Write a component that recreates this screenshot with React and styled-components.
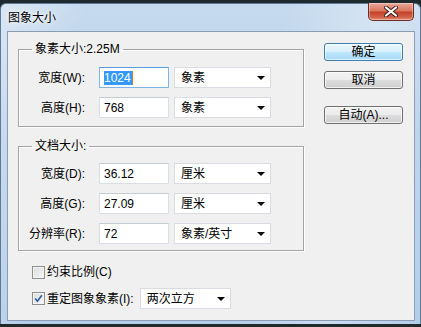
import React from 'react';
import styled, { createGlobalStyle } from 'styled-components';

const GlobalStyle = createGlobalStyle`
    html, body {
        margin: 0;
        padding: 0;
        background: #1f2a2f;
    }
    body {
        font-family: "Liberation Sans", "Noto Sans CJK SC", sans-serif;
        font-size: 12px;
        color: #000;
    }
`;

const Window = styled.div`
    box-sizing: border-box;
    width: 421px;
    height: 321px;
    margin-top: 3px;
    padding: 0 5px 3px 6px;
    border-radius: 6px 6px 0 0;
    border: 1px solid #5d7a99;
    border-bottom: none;
    background:
        linear-gradient(100deg, rgba(255,255,255,0.35) 0%, rgba(255,255,255,0) 18%, rgba(255,255,255,0) 60%, rgba(255,255,255,0.3) 80%, rgba(255,255,255,0) 100%),
        linear-gradient(180deg, #c6daee 0%, #b6cfe9 40%, #b4cde7 100%);
    display: flex;
    flex-direction: column;
`;

const TitleBar = styled.div`
    display: flex;
    align-items: flex-start;
    justify-content: space-between;
    height: 27px;
`;

const Title = styled.div`
    padding: 7px 0 0 1px;
    font-size: 12px;
    line-height: 14px;
    color: #000;
    text-shadow: 0 0 6px rgba(255,255,255,0.95), 0 0 3px rgba(255,255,255,0.9);
`;

const CloseButton = styled.div`
    width: 46px;
    height: 18px;
    margin-top: -1px;
    margin-right: 1px;
    box-sizing: border-box;
    border: 1px solid #6d2b22;
    border-top: none;
    border-radius: 0 0 5px 5px;
    background: linear-gradient(180deg, #e9a99c 0%, #d9785f 45%, #c4412a 55%, #d2644b 85%, #e5907c 100%);
    box-shadow: inset 0 0 0 1px rgba(255,255,255,0.35);
    display: flex;
    align-items: center;
    justify-content: center;
`;

const Client = styled.div`
    box-sizing: border-box;
    width: 408px;
    height: 290px;
    border: 1px solid #8a9db3;
    background: #f0f0f0;
    display: flex;
    padding: 0 11px 0 10px;
`;

const LeftColumn = styled.div`
    width: 286px;
    display: flex;
    flex-direction: column;
`;

const RightColumn = styled.div`
    margin-left: auto;
    width: 79px;
    padding-top: 11px;
    display: flex;
    flex-direction: column;
`;

const Group = styled.fieldset`
    box-sizing: border-box;
    width: 286px;
    min-width: 0;
    margin: ${p => p.$mt}px 0 0;
    padding: ${p => p.$pt}px 0 ${p => p.$pb}px;
    border: 1px solid #a3a3a3;
    box-shadow: inset 1px 1px 0 #fff, 1px 1px 0 #fff;
    display: flex;
    flex-direction: column;
    gap: 9px;
`;

const Legend = styled.legend`
    margin-left: 13px;
    padding: 0 3px;
    line-height: 14px;
    font-size: 12px;
`;

const Row = styled.div`
    display: grid;
    grid-template-columns: 75px 70px 97px;
    column-gap: 5px;
    align-items: center;
    height: 21px;
`;

const Label = styled.label`
    text-align: right;
    padding-right: 9px;
    line-height: 14px;
    white-space: nowrap;
`;

const TextBox = styled.div`
    box-sizing: border-box;
    height: 21px;
    background: #fff;
    border: 1px solid ${p => (p.$focused ? '#7eb4ea' : '#dadfe6')};
    border-top-color: ${p => (p.$focused ? '#569de5' : '#c5cbd3')};
    padding: 0 4px;
    display: flex;
    align-items: center;
    line-height: 14px;
`;

const Selected = styled.span`
    background: #3399ff;
    color: #fff;
    padding: 0 1px 0 0;
    border-right: 1px solid #e07a1a;
`;

const Combo = styled.div`
    box-sizing: border-box;
    width: ${p => p.$w}px;
    height: 21px;
    background: #fff;
    border: 1px solid #d9dde3;
    padding: 0 5px 0 6px;
    display: flex;
    align-items: center;
    justify-content: space-between;
    line-height: 14px;
`;

const Arrow = styled.span`
    width: 0;
    height: 0;
    border-left: 4px solid transparent;
    border-right: 4px solid transparent;
    border-top: 4px solid #000;
`;

const Button = styled.div`
    box-sizing: border-box;
    height: 18px;
    margin-top: ${p => p.$mt}px;
    border: 1px solid ${p => (p.$default ? '#3c7fb1' : '#707070')};
    border-radius: 3px;
    background: ${p => (p.$default
        ? 'linear-gradient(180deg, #eaf6fd 0%, #d9f0fc 50%, #bee6fd 51%, #a7d9f5 100%)'
        : 'linear-gradient(180deg, #f2f2f2 0%, #ebebeb 50%, #dddddd 51%, #cfcfcf 100%)')};
    box-shadow: inset 0 0 0 1px ${p => (p.$default ? 'rgba(255,255,255,0.6)' : 'rgba(255,255,255,0.7)')};
    display: flex;
    align-items: center;
    justify-content: center;
    line-height: 14px;
`;

const Options = styled.div`
    display: flex;
    flex-direction: column;
    padding-left: 14px;
    margin-top: 14px;
    gap: 9px;
`;

const OptionRow = styled.div`
    display: flex;
    align-items: center;
    height: ${p => p.$h}px;
`;

const Box = styled.span`
    box-sizing: border-box;
    width: 13px;
    height: 13px;
    border: 1px solid #8e8f8f;
    background: linear-gradient(135deg, #dcdcdc 0%, #f6f6f6 100%);
    box-shadow: inset 0 0 0 1px #f4f4f4;
    margin-right: 2px;
    display: flex;
    align-items: center;
    justify-content: center;
`;

const OptionText = styled.span`
    line-height: 14px;
    margin-right: 6px;
`;

function CheckBox({ checked }) {
    return (
        <Box>
            {checked && (
                <svg width="9" height="9" viewBox="0 0 9 9">
                    <path d="M1.2 4.6 L3.4 7.2 L7.9 1.3" fill="none" stroke="#2b5aa0" strokeWidth="1.6" />
                </svg>
            )}
        </Box>
    );
}

const sizeRows = [
    { label: '宽度(W):', value: '1024', unit: '象素', focused: true },
    { label: '高度(H):', value: '768', unit: '象素' },
];

const docRows = [
    { label: '宽度(D):', value: '36.12', unit: '厘米' },
    { label: '高度(G):', value: '27.09', unit: '厘米' },
    { label: '分辨率(R):', value: '72', unit: '象素/英寸' },
];

function FieldRow({ row }) {
    return (
        <Row>
            <Label>{row.label}</Label>
            <TextBox $focused={row.focused}>
                {row.focused ? <Selected>{row.value}</Selected> : row.value}
            </TextBox>
            <Combo $w={97}>
                <span>{row.unit}</span>
                <Arrow />
            </Combo>
        </Row>
    );
}

export default function App() {
    return (
        <>
            <GlobalStyle />
            <Window>
                <TitleBar>
                    <Title>图象大小</Title>
                    <CloseButton>
                        <svg width="16" height="11" viewBox="0 0 16 11">
                            <path d="M3 1.5 L13 9.5 M13 1.5 L3 9.5" stroke="#3a1d18" strokeWidth="4" strokeLinecap="round" />
                            <path d="M3 1.5 L13 9.5 M13 1.5 L3 9.5" stroke="#fff" strokeWidth="2.2" strokeLinecap="round" />
                        </svg>
                    </CloseButton>
                </TitleBar>
                <Client>
                    <LeftColumn>
                        <Group $mt={10} $pt={11} $pb={8}>
                            <Legend>象素大小:2.25M</Legend>
                            {sizeRows.map(r => <FieldRow key={r.label} row={r} />)}
                        </Group>
                        <Group $mt={12} $pt={10} $pb={6}>
                            <Legend>文档大小:</Legend>
                            {docRows.map(r => <FieldRow key={r.label} row={r} />)}
                        </Group>
                        <Options>
                            <OptionRow $h={14}>
                                <CheckBox />
                                <OptionText>约束比例(C)</OptionText>
                            </OptionRow>
                            <OptionRow $h={21}>
                                <CheckBox checked />
                                <OptionText>重定图象象素(I):</OptionText>
                                <Combo $w={91}>
                                    <span>两次立方</span>
                                    <Arrow />
                                </Combo>
                            </OptionRow>
                        </Options>
                    </LeftColumn>
                    <RightColumn>
                        <Button $default $mt={0}>确定</Button>
                        <Button $mt={10}>取消</Button>
                        <Button $mt={17}>自动(A)...</Button>
                    </RightColumn>
                </Client>
            </Window>
        </>
    );
}
